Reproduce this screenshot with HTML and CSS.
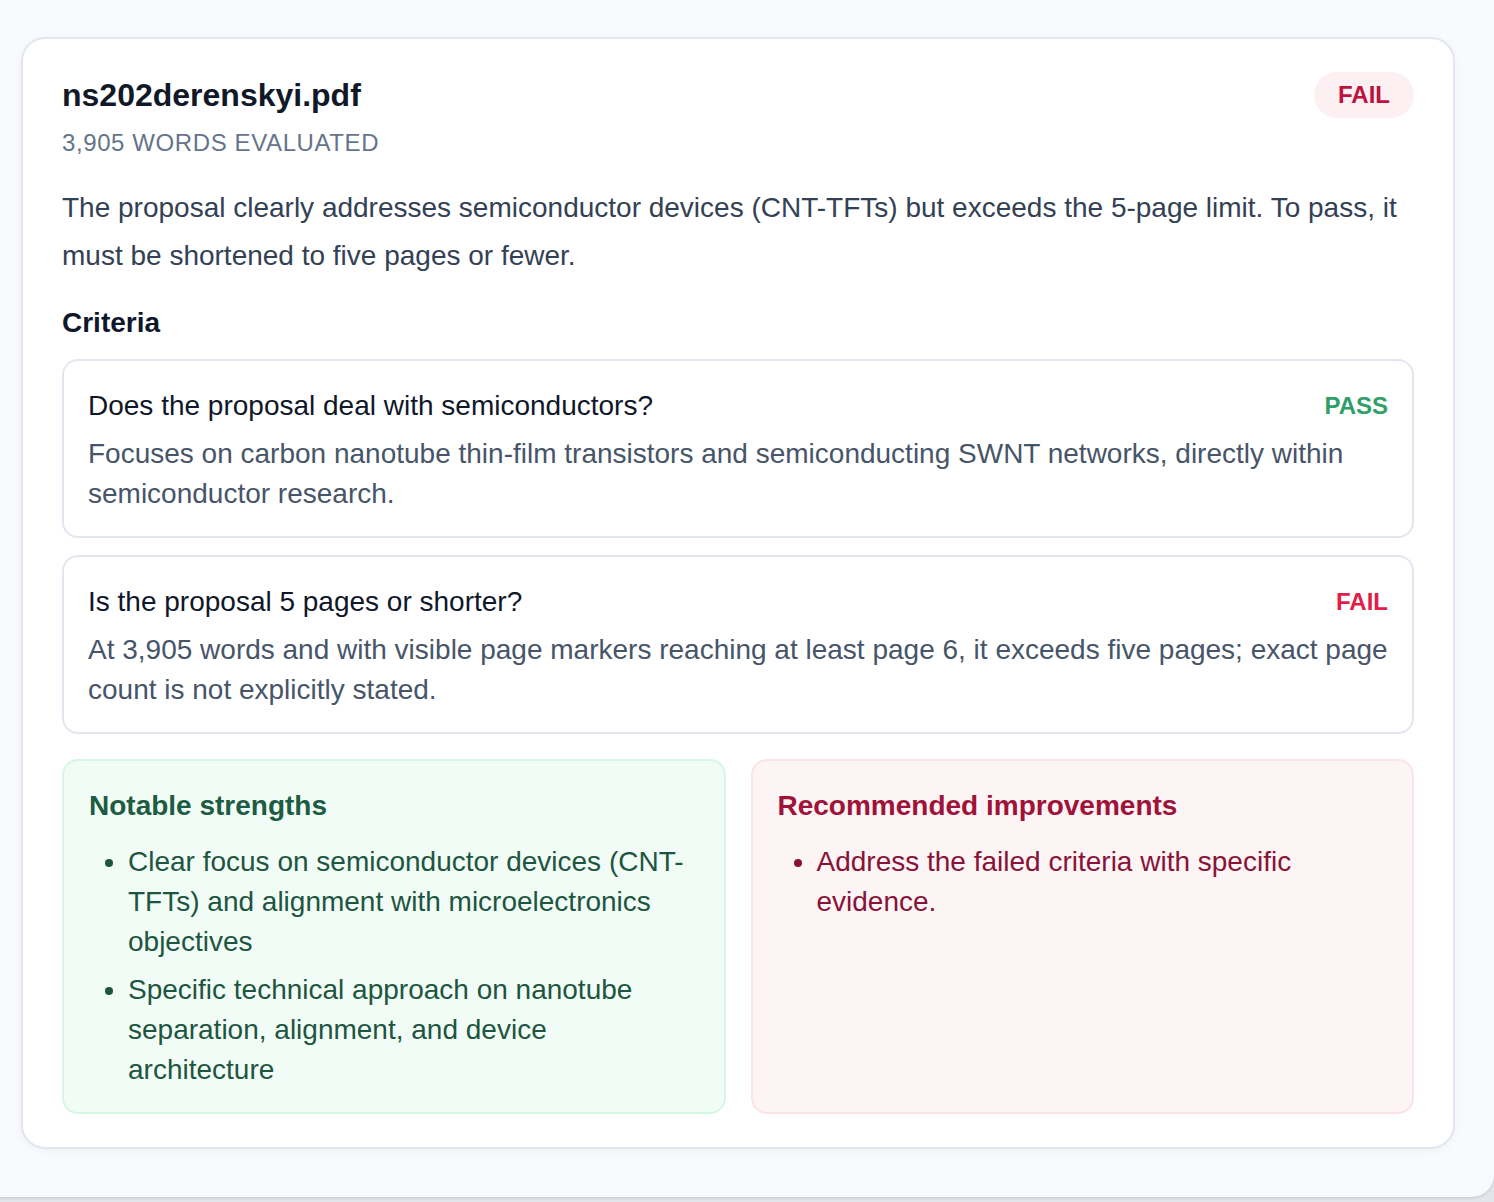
FILE: index.html
```html
<!DOCTYPE html>
<html lang="en">
<head>
<meta charset="utf-8">
<title>ns202derenskyi.pdf</title>
<link rel="stylesheet" href="styles.css">
</head>
<body>
<div class="page">
  <section class="card">
    <header class="card-head">
      <h1 class="file-name">ns202derenskyi.pdf</h1>
      <span class="badge badge-fail">FAIL</span>
    </header>
    <p class="meta">3,905 words evaluated</p>
    <p class="summary">The proposal clearly addresses semiconductor devices (CNT-TFTs) but exceeds the 5-page limit. To pass, it must be shortened to five pages or fewer.</p>

    <h2 class="section-title">Criteria</h2>
    <div class="criteria">
      <div class="criterion">
        <div class="criterion-head">
          <span class="question">Does the proposal deal with semiconductors?</span>
          <span class="verdict verdict-pass">PASS</span>
        </div>
        <p class="reason">Focuses on carbon nanotube thin-film transistors and semiconducting SWNT networks, directly within semiconductor research.</p>
      </div>
      <div class="criterion">
        <div class="criterion-head">
          <span class="question">Is the proposal 5 pages or shorter?</span>
          <span class="verdict verdict-fail">FAIL</span>
        </div>
        <p class="reason">At 3,905 words and with visible page markers reaching at least page 6, it exceeds five pages; exact page count is not explicitly stated.</p>
      </div>
    </div>

    <div class="feedback">
      <div class="panel panel-good">
        <h3 class="panel-title">Notable strengths</h3>
        <ul class="panel-list">
          <li>Clear focus on semiconductor devices (CNT-TFTs) and alignment with microelectronics objectives</li>
          <li>Specific technical approach on nanotube separation, alignment, and device architecture</li>
        </ul>
      </div>
      <div class="panel panel-bad">
        <h3 class="panel-title">Recommended improvements</h3>
        <ul class="panel-list">
          <li>Address the failed criteria with specific evidence.</li>
        </ul>
      </div>
    </div>
  </section>
</div>
</body>
</html>
```

FILE: styles.css
```css
* { box-sizing: border-box; }

html, body {
  margin: 0;
  padding: 0;
}

body {
  background: #e3e5ea;
  font-family: "Liberation Sans", Arial, sans-serif;
  height: 1202px;
  overflow: hidden;
}

.page {
  background: #f9fafd;
  height: 1197px;
  padding: 37px 39px 0 21px;
  border-bottom-right-radius: 22px;
  box-shadow: 0 1px 3px rgba(100, 110, 130, 0.25);
}

.card {
  background: #ffffff;
  border: 2px solid #e2e6f0;
  border-radius: 24px;
  padding: 33px 39px 33px 39px;
  box-shadow: 0 2px 10px rgba(15, 23, 42, 0.04);
}

.card-head {
  display: flex;
  align-items: center;
  justify-content: space-between;
  height: 46px;
}

.file-name {
  margin: 0;
  font-size: 32px;
  font-weight: 700;
  color: #111827;
  line-height: 40px;
}

.badge {
  display: inline-flex;
  align-items: center;
  justify-content: center;
  height: 46px;
  width: 100px;
  border-radius: 23px;
  font-size: 24px;
  font-weight: 700;
}

.badge-fail {
  background: #fcf0f2;
  color: #be123c;
}

.meta {
  margin: 11px 0 0;
  font-size: 24px;
  line-height: 28px;
  letter-spacing: 0.6px;
  text-transform: uppercase;
  color: #64748b;
}

.summary {
  margin: 27px 0 0;
  font-size: 28px;
  line-height: 48px;
  color: #334155;
}

.section-title {
  margin: 27px 0 0;
  font-size: 28px;
  line-height: 32px;
  font-weight: 700;
  color: #0f172a;
}

.criteria {
  margin-top: 20px;
  display: flex;
  flex-direction: column;
  gap: 17px;
}

.criterion {
  border: 2px solid #e2e6f0;
  border-radius: 16px;
  padding: 25px 24px 22px 24px;
}

.criterion-head {
  display: flex;
  align-items: center;
  justify-content: space-between;
  gap: 20px;
}

.question {
  font-size: 28px;
  line-height: 40px;
  color: #0f172a;
}

.verdict {
  font-size: 24px;
  font-weight: 700;
}

.verdict-pass { color: #2f9e68; }
.verdict-fail { color: #e11d48; }

.reason {
  margin: 8px 0 0;
  font-size: 28px;
  line-height: 40px;
  color: #475569;
}

.feedback {
  margin-top: 25px;
  display: grid;
  grid-template-columns: 1fr 1fr;
  gap: 25px;
}

.panel {
  border: 2px solid;
  border-radius: 16px;
  padding: 27px 24px 22px 25px;
}

.panel-good {
  background: #f1fcf6;
  border-color: #d6f7e4;
  color: #1e5540;
}

.panel-bad {
  background: #fcf4f5;
  border-color: #fbe3e6;
  color: #881337;
}

.panel-title {
  margin: 0;
  font-size: 28px;
  line-height: 36px;
  font-weight: 700;
}

.panel-good .panel-title { color: #1d5c43; }
.panel-bad .panel-title { color: #9f1239; }

.panel-list {
  margin: 18px 0 0;
  padding-left: 39px;
  display: flex;
  flex-direction: column;
  gap: 8px;
}

.panel-list li {
  font-size: 28px;
  line-height: 40px;
}
```
